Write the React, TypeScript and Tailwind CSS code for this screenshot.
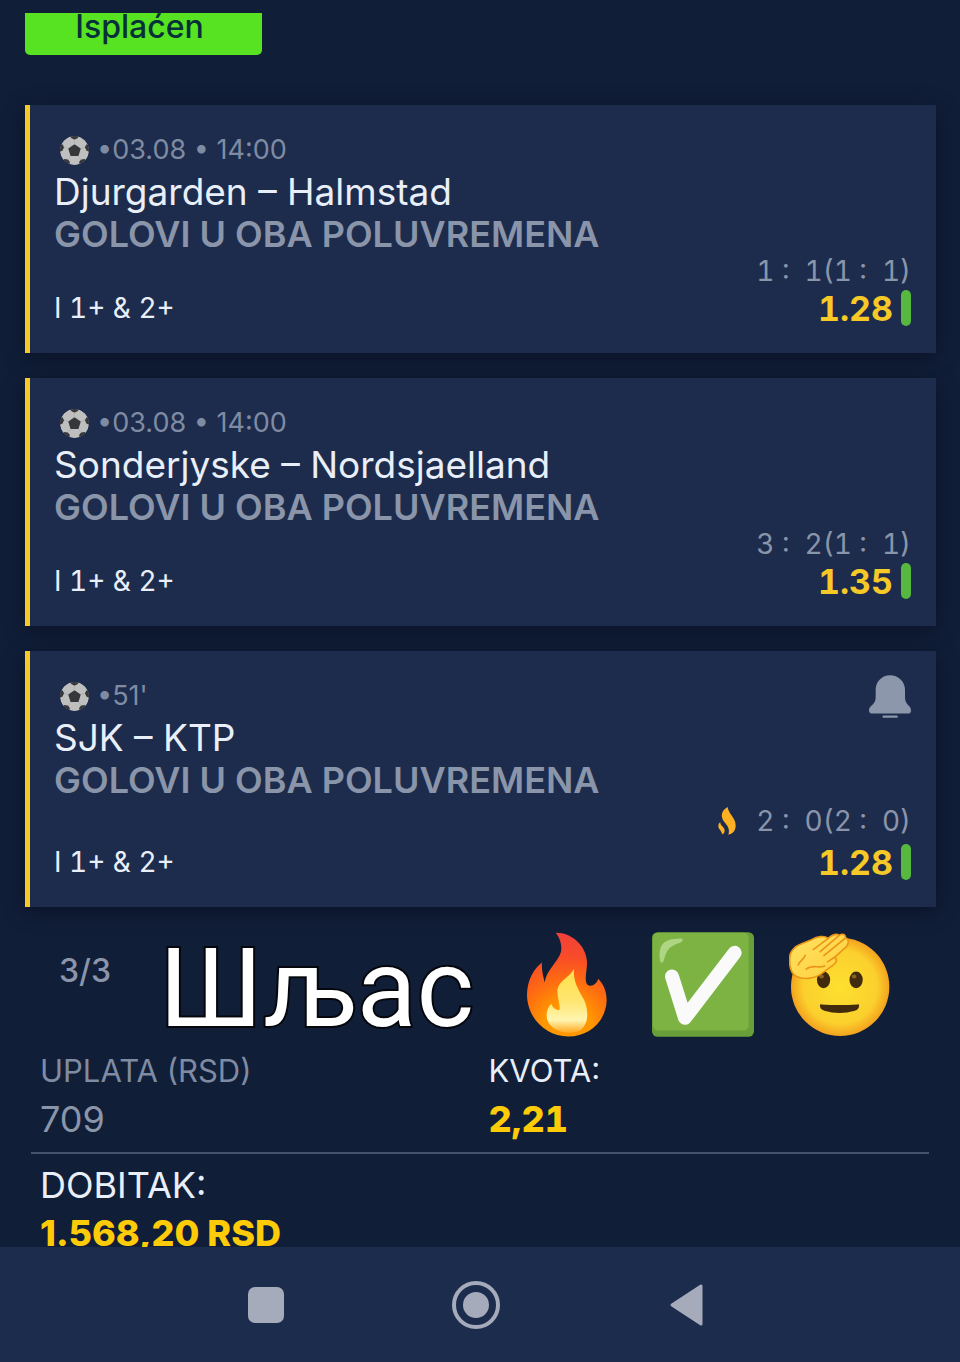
import type { ReactNode } from "react";

interface Match {
  id: number;
  time: string;
  teams: string;
  market: string;
  pick: string;
  score: string;
  odds: string;
  live?: boolean;
}

const matches: Match[] = [
  {
    id: 1,
    time: "03.08 • 14:00",
    teams: "Djurgarden – Halmstad",
    market: "GOLOVI U OBA POLUVREMENA",
    pick: "I 1+ & 2+",
    score: "1 :  1(1 :  1)",
    odds: "1.28",
  },
  {
    id: 2,
    time: "03.08 • 14:00",
    teams: "Sonderjyske – Nordsjaelland",
    market: "GOLOVI U OBA POLUVREMENA",
    pick: "I 1+ & 2+",
    score: "3 :  2(1 :  1)",
    odds: "1.35",
  },
  {
    id: 3,
    time: "51'",
    teams: "SJK – KTP",
    market: "GOLOVI U OBA POLUVREMENA",
    pick: "I 1+ & 2+",
    score: "2 :  0(2 :  0)",
    odds: "1.28",
    live: true,
  },
];

function BallIcon() {
  return (
    <svg viewBox="0 0 88 88" className="size-[29px] shrink-0" aria-hidden="true">
      <defs>
        <clipPath id="ball-clip">
          <circle cx="44" cy="44" r="44" />
        </clipPath>
      </defs>
      <g clipPath="url(#ball-clip)">
        <circle cx="44" cy="44" r="44" fill="#bfbfbf" />
        <g fill="#35373b">
          <path d="M44 25 63 38 56 61H32L25 38Z" />
          <path d="M31 0H57L54 6 44 11 34 6Z" />
          <path d="M88 28V48L80 44 76 34 80 25Z" />
          <path d="M0 28V48L8 44 12 34 8 25Z" />
          <path d="M12 70 24 71 30 79 28 90H8Z" />
          <path d="M76 70 64 71 58 79 60 90H80Z" />
        </g>
        <g stroke="#a9abae" strokeWidth="2" fill="none">
          <path d="M44 25V11M63 38 76 34M56 61 64 71M32 61 24 71M25 38 12 34" />
        </g>
      </g>
    </svg>
  );
}

function BellIcon() {
  return (
    <svg viewBox="567 104 126 128" className="h-[43px] w-[42px]" fill="#8c97ab" aria-hidden="true">
      <path d="M630 104C606 104 587 123 587 147V170C587 194 567 194 567 209C567 216 571 219 577 219H684C690 219 693 216 693 209C693 194 675 194 675 170V147C675 123 655 104 630 104Z" />
      <rect x="608" y="225" width="45" height="7" rx="2" />
    </svg>
  );
}

function FlameIcon() {
  return (
    <svg viewBox="112 500 54 84" className="h-7 w-[18px]" fill="#fdb022" aria-hidden="true">
      <path d="M141 500C143 521 166 532 165 557C164 573 155 581 143 583C149 566 140 556 131 545C118 528 122 511 141 500Z" />
      <path d="M119 546C118 556 132 560 132 571C132 577 128 581 124 582C125 572 113 568 113 557C113 551 116 548 119 546Z" />
    </svg>
  );
}

function FireSticker() {
  return (
    <svg viewBox="84 46 240 314" className="h-[105px] w-[80px]" role="img" aria-label="fire">
      <defs>
        <radialGradient id="fire-outer" gradientUnits="userSpaceOnUse" cx="205" cy="330" r="280">
          <stop offset="0.25" stopColor="#ff9800" />
          <stop offset="0.5" stopColor="#ff6d10" />
          <stop offset="0.75" stopColor="#f84c28" />
          <stop offset="1" stopColor="#f0403a" />
        </radialGradient>
        <linearGradient id="fire-inner" x1="0" y1="0" x2="0" y2="1">
          <stop offset="0" stopColor="#ffe04a" />
          <stop offset="0.5" stopColor="#ffe670" />
          <stop offset="0.8" stopColor="#fff5b0" />
          <stop offset="1" stopColor="#ffa820" />
        </linearGradient>
      </defs>
      <path
        fill="url(#fire-outer)"
        d="M170 48C215 46 262 85 264 135C265 157 255 187 264 202C275 212 292 205 298 186C315 205 323 225 323 252C320 315 270 359 208 359C140 358 86 305 84 235C84 190 105 155 129 137C127 160 133 180 137 197C142 160 178 135 186 105C190 80 180 60 170 48Z"
      />
      <path
        fill="url(#fire-inner)"
        d="M225 156C222 190 236 215 250 240C264 262 268 290 262 315C252 342 235 348 208 348C170 346 142 325 143 295C143 280 150 268 157 261C160 272 168 280 181 280C186 262 172 240 176 215C183 190 214 180 225 156Z"
      />
    </svg>
  );
}

function CheckSticker() {
  return (
    <svg viewBox="461 45 306 314" className="h-[105px] w-[102px]" role="img" aria-label="check mark">
      <rect x="461" y="45" width="306" height="314" rx="17" fill="#689f38" />
      <rect x="464" y="47" width="287" height="293" rx="15" fill="#7cb342" />
      <path
        d="M485 130C480 85 492 65 545 64C557 64 555 72 545 77C513 87 505 99 497 128C495 138 486 140 485 130Z"
        fill="#aed581"
      />
      <path
        d="M521 178 560 302 709 107"
        fill="none"
        stroke="#fafafa"
        strokeWidth="42"
        strokeLinecap="round"
        strokeLinejoin="round"
      />
    </svg>
  );
}

function SaluteSticker() {
  return (
    <svg viewBox="60 46 304 310" className="h-[103px] w-[101px]" role="img" aria-label="saluting face">
      <defs>
        <radialGradient id="salute-face" cx="0.5" cy="0.5" r="0.5">
          <stop offset="0" stopColor="#fde030" />
          <stop offset="0.75" stopColor="#fbd02d" />
          <stop offset="1" stopColor="#f3a21f" />
        </radialGradient>
        <linearGradient id="salute-hand" x1="0" y1="0" x2="1" y2="1">
          <stop offset="0" stopColor="#ffe262" />
          <stop offset="1" stopColor="#ffcf3c" />
        </linearGradient>
      </defs>
      <circle cx="214" cy="208" r="148" fill="url(#salute-face)" />
      <g fill="#422b0d">
        <ellipse cx="164" cy="187" rx="20" ry="25" />
        <ellipse cx="262" cy="187" rx="20" ry="25" />
        <path d="M153 264Q153 260 158 261Q212 265 266 261Q271 260 271 264Q271 276 258 280Q212 294 166 280Q153 275 153 264Z" />
      </g>
      <g fill="#896024">
        <ellipse cx="158" cy="177" rx="7" ry="6" />
        <ellipse cx="256" cy="177" rx="7" ry="6" />
      </g>
      <path
        fill="url(#salute-hand)"
        stroke="#eb9618"
        strokeWidth="5"
        strokeLinejoin="round"
        d="M62 126C60 104 76 86 96 79L128 66C145 56 166 53 178 62C190 52 203 47 211 53C222 46 231 51 230 61C241 63 241 77 232 88L197 119C206 125 204 135 194 142L157 169C134 185 102 186 84 178C66 168 61 150 62 126Z"
      />
      <g fill="none" stroke="#eb9618" strokeWidth="5" strokeLinecap="round">
        <path d="M178 62 133 96" />
        <path d="M211 53 154 102" />
        <path d="M230 61 165 114" />
        <path d="M197 119 176 133" />
        <path d="M88 142C92 128 103 129 109 113" />
        <path d="M112 155C130 139 150 154 167 145" />
      </g>
    </svg>
  );
}

function MatchCard({ match }: { match: Match }) {
  return (
    <article className="flex flex-col border-l-[5px] border-[#f6c927] bg-[#1d2c4c] pt-[25px] pr-[25px] pb-[25px] pl-6 shadow-[0_4px_20px_rgba(0,5,20,0.45)]">
      <div className="flex h-10 items-center justify-between text-[27px] text-[#7f8ba3]">
        <div className="flex items-center gap-2 pl-1.5">
          <BallIcon />
          <span>•{match.time}</span>
        </div>
        {match.live && (
          <button type="button" aria-label="Notifications">
            <BellIcon />
          </button>
        )}
      </div>
      <h2 className="text-[37px] leading-[44px] text-[#e9eff9]">{match.teams}</h2>
      <p className="text-[36px] leading-10 font-semibold text-[#8a95aa]">{match.market}</p>
      <div
        className={
          match.live
            ? "flex h-[42px] items-center justify-end gap-5 text-[28px] text-[#8a95aa]"
            : "flex h-[34px] items-center justify-end text-[28px] text-[#8a95aa]"
        }
      >
        {match.live && <FlameIcon />}
        <span className="whitespace-pre tabular-nums">{match.score}</span>
      </div>
      <div className="flex h-10 items-center justify-between">
        <span className="text-[28px] text-[#e9eff9] tabular-nums">{match.pick}</span>
        <span className="flex items-center gap-2 text-[34px] font-bold text-[#f6c927] tabular-nums">
          {match.odds}
          <span className="h-9 w-2.5 rounded-full bg-[#56b83e]" />
        </span>
      </div>
    </article>
  );
}

function NavButton({ label, children }: { label: string; children: ReactNode }) {
  return (
    <button type="button" aria-label={label} className="flex size-12 items-center justify-center">
      {children}
    </button>
  );
}

export default function App() {
  return (
    <div className="flex h-screen flex-col bg-[#111e38] pt-[13px] font-['Inter',sans-serif]">
      <main className="min-h-0 flex-1 overflow-y-auto [scrollbar-width:none]">
        <div className="-mt-3.5 mr-6 ml-[25px] flex h-14 w-[237px] items-center justify-center rounded-[5px] bg-[#57e322] pr-2 text-[32px] font-medium text-[#05303a]">
          Isplaćen
        </div>

        <section className="mt-[50px] mr-6 ml-[25px] flex flex-col gap-[25px]">
          {matches.map((match) => (
            <MatchCard key={match.id} match={match} />
          ))}
        </section>

        <div className="flex h-[140px] items-center pl-[59px]">
          <span className="w-[100px] pb-3 text-[32px] font-medium text-[#8a95aa]">3/3</span>
          <span className="pt-6 font-['Roboto',sans-serif] text-[110px] leading-none text-white [-webkit-text-stroke:4px_#05070d] [paint-order:stroke_fill]">
            Шљас
          </span>
          <div className="ml-[53px] flex items-center gap-x-[45px] pt-3.5">
            <FireSticker />
            <CheckSticker />
            <div className="-ml-2.5">
              <SaluteSticker />
            </div>
          </div>
        </div>

        <dl className="mx-[31px]">
          <div className="grid grid-cols-2 border-b-2 border-[#46526c] pb-[9px] pl-[9px]">
            <div>
              <dt className="text-[31px] leading-[48px] text-[#7f8ba3]">UPLATA (RSD)</dt>
              <dd className="text-[36px] leading-[48px] text-[#8a95aa]">709</dd>
            </div>
            <div className="pl-1">
              <dt className="text-[31px] leading-[48px] text-[#e9eff9]">KVOTA:</dt>
              <dd className="text-[36px] leading-[48px] font-extrabold text-[#fdcb08] tabular-nums">2,21</dd>
            </div>
          </div>
          <div className="pt-[7px] pl-[9px]">
            <dt className="text-[36px] leading-[48px] text-[#e9eff9]">DOBITAK:</dt>
            <dd className="text-[36px] leading-[48px] font-extrabold text-[#fdcb08]">1.568,20 RSD</dd>
          </div>
        </dl>
      </main>

      <nav className="flex h-[115px] shrink-0 items-center justify-center gap-[162px] bg-[#1c2c4c] pr-2">
        <NavButton label="Recent apps">
          <span className="size-9 rounded-[7px] bg-[#a5abba]" />
        </NavButton>
        <NavButton label="Home">
          <span className="flex size-12 items-center justify-center rounded-full border-4 border-[#a5abba]">
            <span className="size-[26px] rounded-full bg-[#a5abba]" />
          </span>
        </NavButton>
        <NavButton label="Back">
          <svg viewBox="0 0 33 42" className="h-[42px] w-[33px]" aria-hidden="true">
            <path d="M2 21 31 2V40Z" fill="#a5abba" stroke="#a5abba" strokeWidth="3" strokeLinejoin="round" />
          </svg>
        </NavButton>
      </nav>
    </div>
  );
}
